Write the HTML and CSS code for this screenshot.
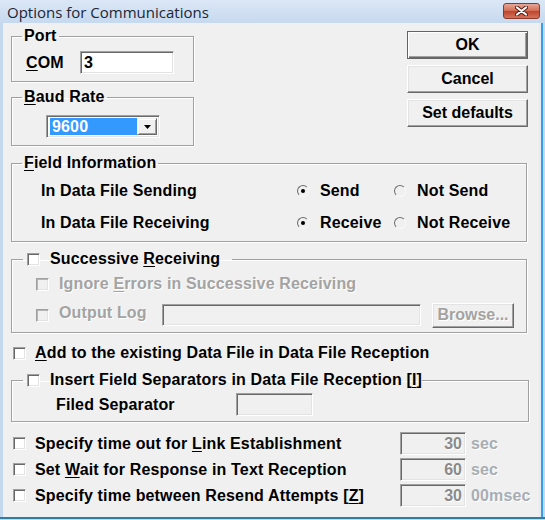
FILE: index.html
```html
<!DOCTYPE html>
<html lang="en">

<head>
  <meta charset="UTF-8">
  <meta name="viewport" content="width=device-width, initial-scale=1.0">
  <title>Options for Communications</title>
  <link rel="stylesheet" href="styles.css">
</head>

<body>
  <div class="window">
    <div class="titlebar">
      <span class="title">Options for Communications</span>
      <span class="close">
        <svg width="13" height="10" viewBox="0 0 13 10">
          <path d="M2 1.5 L11 8.5 M11 1.5 L2 8.5" stroke="#5a1a10" stroke-width="4" stroke-linecap="round" />
          <path d="M2 1.5 L11 8.5 M11 1.5 L2 8.5" stroke="#ffffff" stroke-width="2.2" stroke-linecap="round" />
        </svg>
      </span>
    </div>

    <div class="frame">
      <div class="client">
        <div class="top">
          <div class="top-left">
            <fieldset class="group group-small">
              <legend>Port</legend>
              <div class="port-body">
                <label class="port-label"><u>C</u>OM</label>
                <input class="field port-input" type="text" value="3">
              </div>
            </fieldset>

            <fieldset class="group group-small baud">
              <legend><u>B</u>aud Rate</legend>
              <div class="baud-body">
                <div class="combo">
                  <span class="combo-value">9600</span>
                  <span class="combo-btn">
                    <svg width="7" height="4" viewBox="0 0 7 4"><path d="M0 0 H7 L3.5 4 Z" fill="#000" /></svg>
                  </span>
                </div>
              </div>
            </fieldset>
          </div>

          <div class="buttons">
            <button class="btn btn-default">OK</button>
            <button class="btn">Cancel</button>
            <button class="btn">Set defaults</button>
          </div>
        </div>

        <fieldset class="group field-info">
          <legend><u>F</u>ield Information</legend>
          <div class="info-rows">
            <div class="info-row">
              <span class="info-label">In Data File Sending</span>
              <span class="radio-opt first"><span class="radio checked"></span>Send</span>
              <span class="radio-opt"><span class="radio"></span>Not Send</span>
            </div>
            <div class="info-row">
              <span class="info-label">In Data File Receiving</span>
              <span class="radio-opt first"><span class="radio checked"></span>Receive</span>
              <span class="radio-opt"><span class="radio"></span>Not Receive</span>
            </div>
          </div>
        </fieldset>

        <fieldset class="group successive">
          <legend class="legend-check">
            <span class="check"></span>
            <span>Successive <u>R</u>eceiving</span>
          </legend>
          <div class="succ-body">
            <div class="sub-row disabled">
              <span class="check"></span>
              <span>Ignore <u>E</u>rrors in Successive Receiving</span>
            </div>
            <div class="sub-row log-row disabled">
              <span class="check"></span>
              <span class="log-label">Output Log</span>
              <input class="field log-input" type="text" disabled>
              <button class="btn btn-browse" disabled>Browse...</button>
            </div>
          </div>
        </fieldset>

        <div class="plain-row add-row">
          <span class="check"></span>
          <span><u>A</u>dd to the existing Data File in Data File Reception</span>
        </div>

        <fieldset class="group insert">
          <legend class="legend-check tight">
            <span class="check"></span>
            <span>Insert Field Separators in Data File Reception [<u>I</u>]</span>
          </legend>
          <div class="insert-body">
            <span class="sep-label">Filed Separator</span>
            <input class="field sep-input" type="text" disabled>
          </div>
        </fieldset>

        <div class="time-rows">
          <div class="plain-row">
            <span class="check"></span>
            <span class="time-label">Specify time out for <u>L</u>ink Establishment</span>
            <input class="field num" type="text" value="30" disabled>
            <span class="unit">sec</span>
          </div>
          <div class="plain-row">
            <span class="check"></span>
            <span class="time-label">Set <u>W</u>ait for Response in Text Reception</span>
            <input class="field num" type="text" value="60" disabled>
            <span class="unit">sec</span>
          </div>
          <div class="plain-row">
            <span class="check"></span>
            <span class="time-label">Specify time between Resend Attempts [<u>Z</u>]</span>
            <input class="field num" type="text" value="30" disabled>
            <span class="unit">00msec</span>
          </div>
        </div>
      </div>
    </div>
  </div>
</body>

</html>
```

FILE: styles.css
```css
* {
  box-sizing: border-box;
}

body {
  margin: 0;
  background-color: #c4d8ee;
  font-family: "Liberation Sans", Arial, sans-serif;
  font-weight: bold;
  font-size: 16px;
  letter-spacing: 0.15px;
  color: #000;
  overflow: hidden;
}

u {
  text-decoration-thickness: 1px;
  text-underline-offset: 2px;
}

.window {
  width: 545px;
  height: 520px;
}

/* title bar */
.titlebar {
  height: 23px;
  display: flex;
  align-items: center;
  justify-content: space-between;
  padding: 0 5px 0 7px;
  background: linear-gradient(#dbe7f5, #c6d9ef);
}

.title {
  font-family: "Open Sans", sans-serif;
  font-weight: normal;
  font-size: 15px;
  letter-spacing: 0;
  color: #1b2636;
}

.close {
  width: 37px;
  height: 16px;
  margin-bottom: 1px;
  display: flex;
  align-items: center;
  justify-content: center;
  border: 1px solid #8a3a2c;
  border-radius: 3px;
  background: linear-gradient(#e6a898, #d46a52 50%, #c0432c 51%, #d2735c);
}

/* window body */
.frame {
  height: 496px;
  padding-left: 3px;
  border-bottom: 2px solid #2f7ea6;
}

.client {
  width: 540px;
  height: 494px;
  padding-left: 8px;
  background-color: #f0f0f0;
  border-right: 2px solid #3a9ee4;
  box-shadow: inset -2px 0 0 #e4ecf5;
}

/* group boxes */
.group {
  margin: 0;
  padding: 0;
  min-width: 0;
  width: 516px;
  border: 1px solid #a0a0a0;
  box-shadow: inset 1px 1px 0 #fff, 1px 1px 0 #fff;
}

.group legend {
  margin-left: 10px;
  padding: 0 2px;
  height: 18px;
  line-height: 18px;
}

.group-small {
  width: 183px;
}

.legend-check {
  display: flex;
  align-items: center;
  gap: 10px;
}

.group legend.legend-check {
  margin-left: 11px;
  padding: 0 12px 0 4px;
}

.group legend.legend-check.tight {
  padding-right: 0;
}

/* inputs */
.field {
  height: 23px;
  margin: 0;
  padding: 0 3px;
  border: 1px solid;
  border-color: #a0a0a0 #fff #fff #a0a0a0;
  box-shadow: inset 1px 1px 0 #696969, inset -1px -1px 0 #e3e3e3;
  background-color: #fff;
  font: inherit;
  color: #000;
  outline: none;
}

.field:disabled {
  background-color: #f0f0f0;
}

.check {
  flex: none;
  width: 13px;
  height: 13px;
  border: 1px solid;
  border-color: #a0a0a0 #fff #fff #a0a0a0;
  box-shadow: inset 1px 1px 0 #696969, inset -1px -1px 0 #e3e3e3;
  background-color: #fff;
}

.disabled {
  color: #a3a3a3;
  text-shadow: 1px 1px 0 #fff;
}

.disabled .check {
  background-color: #f0f0f0;
  box-shadow: inset 1px 1px 0 #b4b4b4, inset -1px -1px 0 #e3e3e3;
}

.radio {
  flex: none;
  width: 12px;
  height: 12px;
  border-radius: 50%;
  border: 1px solid;
  border-color: #6c6c6c #f8f8f8 #f8f8f8 #6c6c6c;
  display: flex;
  align-items: center;
  justify-content: center;
}

.radio.checked::after {
  content: '';
  width: 4px;
  height: 4px;
  border-radius: 50%;
  background-color: #000;
}

/* buttons */
.btn {
  width: 121px;
  height: 28px;
  margin: 0;
  padding: 0;
  background-color: #f0f0f0;
  border: 1px solid;
  border-color: #fff #696969 #696969 #fff;
  box-shadow: inset -1px -1px 0 #a0a0a0, inset 1px 1px 0 #e3e3e3;
  font: inherit;
  color: #000;
}

.btn-default {
  border-color: #646464;
  box-shadow: inset 1px 1px 0 #fff, inset -1px -1px 0 #696969, inset -2px -2px 0 #a0a0a0;
}

.btn:disabled {
  color: #a3a3a3;
  text-shadow: 1px 1px 0 #fff;
}

/* top section */
.top {
  display: flex;
  align-items: flex-start;
}

.top-left {
  width: 183px;
  padding-top: 4px;
}

.baud {
  margin-top: 6px;
}

.buttons {
  margin-left: 213px;
  padding-top: 8px;
  display: flex;
  flex-direction: column;
  gap: 6px;
}

.port-body {
  display: flex;
  align-items: center;
  padding: 6px 0 7px 14px;
}

.port-label {
  width: 54px;
}

.port-input {
  width: 94px;
}

.baud-body {
  padding: 9px 0 7px 34px;
}

.combo {
  width: 114px;
  height: 23px;
  display: flex;
  padding: 2px 2px 2px 3px;
  border: 1px solid;
  border-color: #a0a0a0 #fff #fff #a0a0a0;
  box-shadow: inset 1px 1px 0 #696969, inset -1px -1px 0 #e3e3e3;
  background-color: #fff;
}

.combo-value {
  flex: 1;
  padding-left: 2px;
  line-height: 17px;
  background-color: #3399ff;
  color: #fff;
}

.combo-btn {
  width: 20px;
  display: flex;
  align-items: center;
  justify-content: center;
  background-color: #f0f0f0;
  border: 1px solid;
  border-color: #f0f0f0 #696969 #696969 #f0f0f0;
  box-shadow: inset 1px 1px 0 #fff, inset -1px -1px 0 #a0a0a0;
}

/* field information */
.field-info {
  margin-top: 8px;
}

.info-rows {
  display: flex;
  flex-direction: column;
  gap: 8px;
  padding: 7px 0 6px 29px;
}

.info-row {
  height: 24px;
  display: flex;
  align-items: center;
}

.info-label {
  width: 256px;
}

.radio-opt {
  display: flex;
  align-items: center;
  gap: 11px;
}

.radio-opt.first {
  width: 97px;
}

/* successive receiving */
.successive {
  margin-top: 8px;
}

.succ-body {
  display: flex;
  flex-direction: column;
  gap: 7px;
  padding: 5px 0 4px 24px;
}

.sub-row {
  height: 22px;
  display: flex;
  align-items: center;
  gap: 10px;
}

.log-row {
  height: 26px;
  gap: 0;
}

.log-row .check {
  margin-right: 10px;
}

.log-label {
  width: 103px;
  margin-bottom: 5px;
}

.log-input {
  width: 259px;
  height: 22px;
}

.btn-browse {
  width: 82px;
  height: 25px;
  margin-left: 11px;
}

/* plain checkbox rows */
.plain-row {
  height: 23px;
  margin-left: 2px;
  display: flex;
  align-items: center;
}

.plain-row .check {
  margin-right: 9px;
}

.add-row {
  height: 20px;
  margin-top: 10px;
}

.insert {
  width: 518px;
  margin-top: 8px;
}

.insert-body {
  display: flex;
  align-items: center;
  padding: 4px 0 5px 44px;
}

.sep-label {
  width: 180px;
}

.sep-input {
  width: 77px;
}

.time-rows {
  display: flex;
  flex-direction: column;
  gap: 3px;
  margin-top: 10px;
}

.time-label {
  width: 365px;
}

.num {
  width: 66px;
  height: 23px;
  text-align: right;
  color: #8a8a8a;
  -webkit-text-fill-color: #8a8a8a;
  text-shadow: 1px 1px 0 #fff;
}

.unit {
  margin-left: 5px;
  color: #a8adb3;
  text-shadow: 1px 1px 0 #fff;
}
```
